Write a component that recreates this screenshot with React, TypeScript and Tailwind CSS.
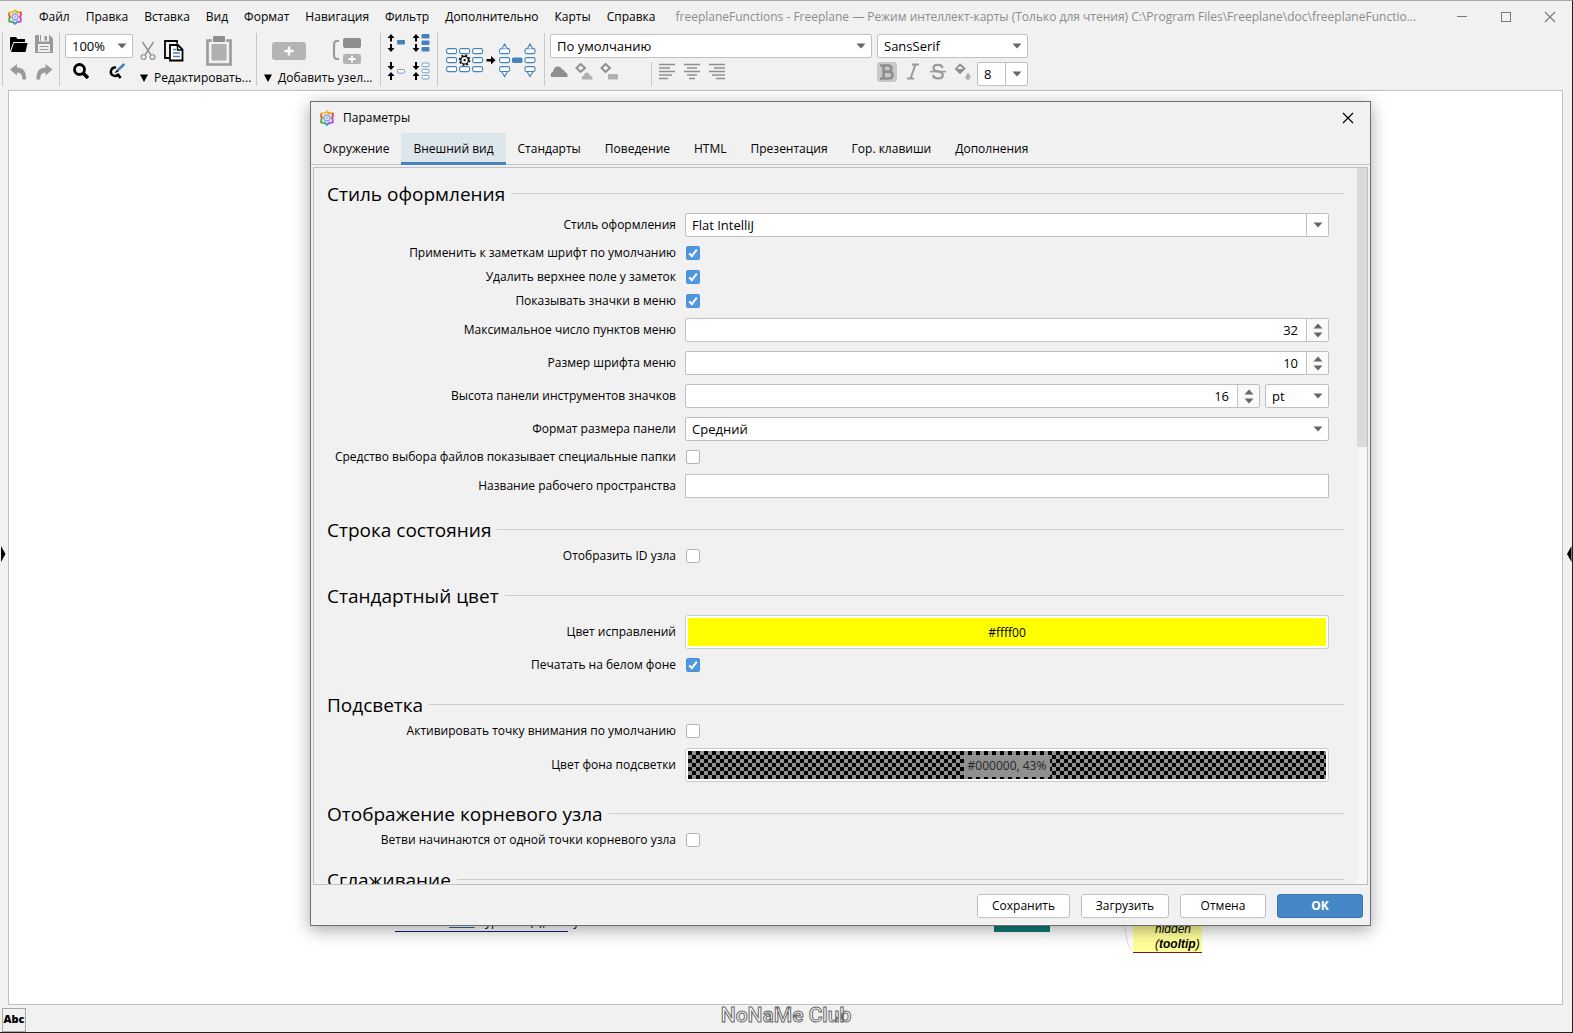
import React, { useState } from 'react';
import clsx from 'clsx';

interface IconProps {
  w: number;
  h: number;
  children: React.ReactNode;
}

const MENU_ITEMS: string[] = [
  'Файл',
  'Правка',
  'Вставка',
  'Вид',
  'Формат',
  'Навигация',
  'Фильтр',
  'Дополнительно',
  'Карты',
  'Справка'
];

const TABS: string[] = [
  'Окружение',
  'Внешний вид',
  'Стандарты',
  'Поведение',
  'HTML',
  'Презентация',
  'Гор. клавиши',
  'Дополнения'
];

const Icon: React.FC<IconProps> = ({ w, h, children }) => (
  <svg width={w} height={h} viewBox={`0 0 ${w} ${h}`} fill="none" className="block shrink-0" aria-hidden="true">
    {children}
  </svg>
);

const Logo: React.FC = () => (
  <Icon w={16} h={16}>
    <g strokeWidth="1.9" strokeLinecap="round">
      <path d="M8 1.4 L9.6 3 L13.6 3.4" stroke="#f0a020" />
      <path d="M13.8 3.6 V6.6 L13 8" stroke="#e8453c" />
      <path d="M13 8 L13.8 9.4 V12.4 L10.4 13" stroke="#c050e8" />
      <path d="M10 13.2 L8 14.8 L6 13.2" stroke="#4a8fe8" />
      <path d="M5.6 13 L2.2 12.4 V9.4 L3 8" stroke="#4cb050" />
      <path d="M3 8 L2.2 6.6 V3.6" stroke="#e05a30" />
      <path d="M2.4 3.4 L6.4 3 L8 1.4" stroke="#e8c830" />
    </g>
    <circle cx="8" cy="8" r="3" stroke="#8fa0d8" strokeWidth="1.4" />
    <circle cx="8" cy="8" r="1.4" fill="#a8c0e8" />
  </Icon>
);

const CloseGlyph: React.FC = () => (
  <Icon w={12} h={12}>
    <path d="M1 1 L11 11 M11 1 L1 11" stroke="currentColor" strokeWidth="1.2" />
  </Icon>
);

const CaretDown: React.FC = () => (
  <Icon w={10} h={6}>
    <path d="M0.5 0.5 H9.5 L5 5.5 Z" fill="#666666" />
  </Icon>
);

const CaretUp: React.FC = () => (
  <Icon w={10} h={6}>
    <path d="M0.5 5.5 H9.5 L5 0.5 Z" fill="#666666" />
  </Icon>
);

const Separator: React.FC = () => <div className="h-[53px] w-px shrink-0 bg-[#c8c8c8]" />;

const ToolButton: React.FC<{ label: string; active?: boolean; children: React.ReactNode }> = ({
  label,
  active,
  children
}) => (
  <button type="button" aria-label={label} className={clsx('shrink-0 rounded-[3px]', active && 'bg-[#c8c8c8]')}>
    {children}
  </button>
);

interface ComboProps {
  label?: string;
  id?: string;
  value: string;
  className?: string;
  split?: boolean;
}

const Combo: React.FC<ComboProps> = ({ label, id, value, className, split }) => (
  <div className={clsx('relative flex h-6', className)}>
    <select
      id={id}
      aria-label={label}
      defaultValue={value}
      className="h-full w-full appearance-none rounded-[2px] border border-[#c0c0c0] bg-white pr-6 pl-1.5 text-[13px] leading-5 text-black outline-none"
    >
      <option>{value}</option>
    </select>
    <span
      className={clsx(
        'pointer-events-none absolute inset-y-0 right-0 flex w-[23px] items-center justify-center',
        split && 'border-l border-[#c0c0c0]'
      )}
    >
      <CaretDown />
    </span>
  </div>
);

const Spinner: React.FC<{ id: string; value: string }> = ({ id, value }) => (
  <div className="flex h-6 flex-1 overflow-hidden rounded-[2px] border border-[#c0c0c0] bg-white">
    <input
      id={id}
      type="text"
      inputMode="numeric"
      defaultValue={value}
      className="min-w-0 flex-1 bg-transparent pr-2 text-right text-[13px] leading-5 outline-none"
    />
    <div className="flex w-[22px] flex-col items-center justify-center gap-[3px] border-l border-[#c0c0c0] bg-[#fafafa]">
      <button type="button" aria-label="Увеличить">
        <CaretUp />
      </button>
      <button type="button" aria-label="Уменьшить">
        <CaretDown />
      </button>
    </div>
  </div>
);

const Section: React.FC<{ title: string; children?: React.ReactNode }> = ({ title, children }) => (
  <section className="flex flex-col gap-[7px]">
    <div className="flex h-6 items-center gap-1.5">
      <h2 className="pt-0.5 text-[19px] leading-6 whitespace-nowrap">{title}</h2>
      <div className="h-px flex-1 bg-[#cdcdcd]" />
    </div>
    {children}
  </section>
);

interface RowProps {
  id: string;
  label: string;
  size: 'check' | 'field' | 'color';
  children: React.ReactNode;
}

const Row: React.FC<RowProps> = ({ id, label, size, children }) => (
  <div
    className={clsx(
      'flex gap-[9px] pr-[15px]',
      size === 'check' && 'h-[17px] items-start',
      size === 'field' && 'h-[26px] items-center',
      size === 'color' && 'h-9 items-center'
    )}
  >
    <label htmlFor={id} className="w-[349px] shrink-0 text-right leading-4 whitespace-nowrap">
      {label}
    </label>
    <div className="flex flex-1 items-center gap-[5px]">{children}</div>
  </div>
);

const CheckRow: React.FC<{ id: string; label: string; initial?: boolean }> = ({ id, label, initial = false }) => {
  const [checked, setChecked] = useState<boolean>(initial);

  return (
    <Row id={id} label={label} size="check">
      <span className="relative flex size-4 items-center justify-center">
        <input
          id={id}
          type="checkbox"
          checked={checked}
          onChange={(e) => setChecked(e.target.checked)}
          className="size-[14px] appearance-none rounded-[2px] border border-[#b4b4b4] bg-white checked:border-[#4a90d9] checked:bg-[#4f97e0]"
        />
        {checked && (
          <span className="pointer-events-none absolute inset-0 flex items-center justify-center">
            <Icon w={10} h={10}>
              <path d="M1.2 5.4 L3.8 8.2 L8.8 1.6" stroke="#ffffff" strokeWidth="2" />
            </Icon>
          </span>
        )}
      </span>
    </Row>
  );
};

const AppearanceTab: React.FC = () => (
  <div className="flex flex-col gap-[18px]">
    <Section title="Стиль оформления">
      <Row id="laf" label="Стиль оформления" size="field">
        <Combo id="laf" value="Flat IntelliJ" className="flex-1" split />
      </Row>
      <CheckRow id="note-font" label="Применить к заметкам шрифт по умолчанию" initial />
      <CheckRow id="note-margin" label="Удалить верхнее поле у заметок" initial />
      <CheckRow id="menu-icons" label="Показывать значки в меню" initial />
      <Row id="menu-max" label="Максимальное число пунктов меню" size="field">
        <Spinner id="menu-max" value="32" />
      </Row>
      <Row id="menu-font" label="Размер шрифта меню" size="field">
        <Spinner id="menu-font" value="10" />
      </Row>
      <Row id="icon-height" label="Высота панели инструментов значков" size="field">
        <Spinner id="icon-height" value="16" />
        <Combo label="Единица" value="pt" className="w-16" />
      </Row>
      <Row id="panel-size" label="Формат размера панели" size="field">
        <Combo id="panel-size" value="Средний" className="flex-1" />
      </Row>
      <CheckRow id="special-folders" label="Средство выбора файлов показывает специальные папки" />
      <Row id="workspace" label="Название рабочего пространства" size="field">
        <input id="workspace" type="text" className="h-6 flex-1 border border-[#c0c0c0] bg-white px-1.5 outline-none" />
      </Row>
    </Section>

    <Section title="Строка состояния">
      <CheckRow id="node-id" label="Отобразить ID узла" />
    </Section>

    <Section title="Стандартный цвет">
      <Row id="edit-color" label="Цвет исправлений" size="color">
        <button
          id="edit-color"
          type="button"
          className="h-[34px] flex-1 rounded-[3px] border border-[#cccccc] bg-white p-0.5"
        >
          <span className="flex h-full items-center justify-center bg-[#ffff00] pt-0.5">#ffff00</span>
        </button>
      </Row>
      <CheckRow id="white-print" label="Печатать на белом фоне" initial />
    </Section>

    <Section title="Подсветка">
      <CheckRow id="spotlight" label="Активировать точку внимания по умолчанию" />
      <Row id="spot-color" label="Цвет фона подсветки" size="color">
        <button
          id="spot-color"
          type="button"
          className="h-[34px] flex-1 rounded-[3px] border border-[#cccccc] bg-white p-0.5"
        >
          <span className="flex h-full items-center justify-center bg-[repeating-conic-gradient(#909090_0_25%,#000000_0_50%)] bg-[length:8px_8px] pt-0.5">
            <span className="bg-[#909090] px-1 leading-[22px] text-[#262626]">#000000, 43%</span>
          </span>
        </button>
      </Row>
    </Section>

    <Section title="Отображение корневого узла">
      <CheckRow id="root-branches" label="Ветви начинаются от одной точки корневого узла" />
    </Section>

    <Section title="Сглаживание" />
  </div>
);

const OptionsDialog: React.FC = () => {
  const [activeTab, setActiveTab] = useState<string>('Внешний вид');

  return (
    <div
      role="dialog"
      aria-label="Параметры"
      className="absolute top-[100px] right-[201px] bottom-[106px] left-[310px] flex flex-col border border-[#6e6e6e] bg-[#f1f1f1] shadow-[0_4px_16px_rgba(0,0,0,0.35)]"
    >
      <div className="flex h-[31px] shrink-0 items-center justify-between pr-4 pl-2">
        <div className="flex items-center gap-2">
          <Logo />
          <span>Параметры</span>
        </div>
        <button type="button" aria-label="Закрыть">
          <CloseGlyph />
        </button>
      </div>

      <div role="tablist" className="flex h-8 shrink-0 border-b border-[#c4c4c4]">
        {TABS.map((tab) => {
          const isActive = tab === activeTab;
          return (
            <button
              key={tab}
              type="button"
              role="tab"
              aria-selected={isActive}
              onClick={() => setActiveTab(tab)}
              className={clsx(
                'h-8 border-b-[3px] px-3 pt-0.5 whitespace-nowrap',
                isActive ? 'border-[#4483bb] bg-[#dde6eb]' : 'border-transparent'
              )}
            >
              {tab}
            </button>
          );
        })}
      </div>

      <div className="mx-0.5 mt-0.5 flex min-h-0 flex-1 border border-[#c0c0c0]">
        <div className="min-w-0 flex-1 overflow-hidden px-[13px] pt-[13px]">
          <AppearanceTab />
        </div>
        <div className="w-[10px] shrink-0 bg-[#f6f6f6]">
          <div className="h-[39%] bg-[#dadada]" />
        </div>
      </div>

      {/* Кнопки внизу окна */}
      <div className="flex h-10 shrink-0 items-center justify-end gap-[11px] pt-0.5 pr-[7px]">
        <button type="button" className="h-6 w-[93px] rounded-[3px] border border-[#c0c0c0] bg-white">
          Сохранить
        </button>
        <button type="button" className="h-6 w-[88px] rounded-[3px] border border-[#c0c0c0] bg-white">
          Загрузить
        </button>
        <button type="button" className="h-6 w-[86px] rounded-[3px] border border-[#c0c0c0] bg-white">
          Отмена
        </button>
        <button type="button" className="h-6 w-[86px] rounded-[3px] border border-[#3d75aa] bg-[#4688c7] font-bold text-white">
          OK
        </button>
      </div>
    </div>
  );
};

const TitleBar: React.FC = () => (
  <header className="flex h-8 shrink-0 items-center pr-4 pl-[7px]">
    <Logo />
    <nav className="ml-2 flex">
      {MENU_ITEMS.map((item) => (
        <button key={item} type="button" className="px-2 whitespace-nowrap">
          {item}
        </button>
      ))}
    </nav>
    <span className="ml-3 min-w-0 flex-1 whitespace-nowrap text-[#8c8c8c]">
      freeplaneFunctions - Freeplane — Режим интеллект-карты (Только для чтения) C:\Program Files\Freeplane\doc\freeplaneFunctio...
    </span>
    <div className="flex shrink-0 items-center gap-8 pl-2 text-[#7a7a7a]">
      <button type="button" aria-label="Свернуть">
        <Icon w={12} h={12}>
          <path d="M1 5.5 H11" stroke="currentColor" />
        </Icon>
      </button>
      <button type="button" aria-label="Развернуть">
        <Icon w={12} h={12}>
          <rect x="1.5" y="1.5" width="9" height="9" stroke="currentColor" />
        </Icon>
      </button>
      <button type="button" aria-label="Закрыть Freeplane">
        <CloseGlyph />
      </button>
    </div>
  </header>
);

const AlignIcon: React.FC<{ d: string }> = ({ d }) => (
  <Icon w={18} h={18}>
    <path d={d} stroke="#8e8e8e" strokeWidth="1.6" />
  </Icon>
);

// Пара стрелок слева от узлов: наружу (развернуть) или внутрь (свернуть)
const FoldArrows: React.FC<{ inward?: boolean }> = ({ inward }) => (
  <path
    d={
      inward
        ? 'M3 0 H5 V4 H7.5 L4 8 L0.5 4 H3 Z M4 10 L7.5 14 H5 V18 H3 V14 H0.5 Z'
        : 'M4 0 L7.5 4 H5 V7.5 H3 V4 H0.5 Z M3 10 H5 V14 H7.5 L4 18 L0.5 14 H3 Z'
    }
    fill="#000000"
  />
);

const NODE_ROWS: number[] = [5, 14, 23];

const Toolbar: React.FC = () => (
  <div className="flex h-[57px] shrink-0 items-start pl-0.5">
    <Separator />
    <div className="grid grid-cols-[18px_18px] gap-x-[7px] gap-y-2.5 py-0.5 pr-1.5 pl-[7px]">
      <ToolButton label="Открыть">
        <Icon w={18} h={18}>
          <path d="M0 16 V3 Q0 2 1 2 H6 L7.5 4 H15 V7 H3.4 Z" fill="#000" />
          <path d="M4 8 H17.5 L15.5 17 H1 Z" fill="#000" />
        </Icon>
      </ToolButton>
      <ToolButton label="Сохранить">
        <Icon w={18} h={18}>
          <path d="M0 0 H14.5 L18 3.5 V18 H0 Z" fill="#9a9a9a" />
          <path d="M4 0 H14 V6.5 H4 Z" fill="#f1f1f1" />
          <path d="M9.5 1 H12 V5.5 H9.5 Z M5 0 H6 V6 H5 Z" fill="#9a9a9a" />
          <path d="M3 9 H15 V17 H3 Z" fill="#f1f1f1" />
          <path d="M4.5 11.5 H13.5 M4.5 14.5 H13.5" stroke="#9a9a9a" />
        </Icon>
      </ToolButton>
      <ToolButton label="Отменить">
        <Icon w={18} h={18}>
          <path d="M0 6.5 L7 1 V4.5 Q16.5 4.5 16 16.5 H12.5 Q12.5 9.5 7 9.5 V12.5 Z" fill="#9a9a9a" />
        </Icon>
      </ToolButton>
      <ToolButton label="Повторить">
        <Icon w={18} h={18}>
          <path d="M17.5 6.5 L10.5 1 V4.5 Q1 4.5 1.5 16.5 H5 Q5 9.5 10.5 9.5 V12.5 Z" fill="#9a9a9a" />
        </Icon>
      </ToolButton>
    </div>
    <Separator />

    <div className="flex flex-col gap-[5px] pt-px pl-[5px]">
      <Combo label="Масштаб" value="100%" className="w-[68px]" />
      <div className="flex gap-5 pl-2">
        <ToolButton label="Найти">
          <Icon w={16} h={16}>
            <circle cx="6.5" cy="6.5" r="5" stroke="#000" strokeWidth="2.8" />
            <path d="M10 10 L15 15" stroke="#000" strokeWidth="3.4" />
          </Icon>
        </ToolButton>
        <ToolButton label="Найти и заменить">
          <Icon w={16} h={16}>
            <path d="M7 4.6 A4.2 4.2 0 1 0 9.6 11" stroke="#000" strokeWidth="2.4" />
            <path d="M8.4 11 L11.6 15" stroke="#000" strokeWidth="2.8" />
            <path d="M15.4 1 L8.6 7.4" stroke="#4483bb" strokeWidth="2.6" />
            <path d="M8 6.8 L5.4 10.2 L9.6 8.4 Z" fill="#000" />
          </Icon>
        </ToolButton>
      </div>
    </div>

    <div className="flex w-[123px] flex-col gap-[3px] pt-0.5 pl-[7px]">
      <div className="flex h-8 items-center gap-2">
        <ToolButton label="Вырезать">
          <Icon w={16} h={20}>
            <path d="M2.5 1 L11 14 M13.5 1 L5 14" stroke="#8e8e8e" strokeWidth="1.4" />
            <circle cx="3.6" cy="16" r="2.4" stroke="#9a9a9a" strokeWidth="1.4" />
            <circle cx="12.4" cy="16" r="2.4" stroke="#9a9a9a" strokeWidth="1.4" />
          </Icon>
        </ToolButton>
        <ToolButton label="Копировать">
          <Icon w={20} h={22}>
            <path d="M5 18 H1 V1 H13 V3.5" stroke="#000" strokeWidth="1.8" />
            <path d="M6 5 H14 L18.5 9.5 V20.5 H6 Z" fill="#fff" stroke="#000" strokeWidth="1.8" />
            <path d="M13.5 5 V10 H18" stroke="#000" strokeWidth="1.4" />
            <path d="M9 9.5 H12 M9 13 H16 M9 16.5 H16" stroke="#4483bb" strokeWidth="1.4" />
          </Icon>
        </ToolButton>
        <span className="w-1.5" />
        <ToolButton label="Вставить">
          <Icon w={26} h={30}>
            <path d="M6 4.5 H1.5 V28.5 H24.5 V4.5 H20" stroke="#9a9a9a" strokeWidth="2.6" />
            <rect x="7" y="0" width="12" height="6" rx="1" fill="#8e8e8e" />
            <rect x="5.5" y="8" width="15" height="16.5" rx="1" fill="#b0b0b0" />
          </Icon>
        </ToolButton>
      </div>
      <button type="button" className="flex items-center gap-1.5 leading-4 whitespace-nowrap">
        <Icon w={8} h={8}>
          <path d="M0 0.5 H8 L4 8 Z" fill="#000" />
        </Icon>
        Редактировать...
      </button>
    </div>
    <Separator />

    <div className="flex w-[123px] flex-col gap-[3px] pt-0.5 pl-[7px]">
      <div className="flex h-8 items-center gap-[26px] pl-2">
        <ToolButton label="Новый дочерний узел">
          <Icon w={34} h={18}>
            <rect x="0" y="0" width="34" height="18" rx="3" fill="#b4b4b4" />
            <path d="M17 4.5 V13.5 M12.5 9 H21.5" stroke="#fff" strokeWidth="2.4" />
          </Icon>
        </ToolButton>
        <ToolButton label="Новый соседний узел">
          <Icon w={30} h={28}>
            <path d="M7 4 H5 Q2 4 2 8 V18 Q2 22 5 22 H7" stroke="#9a9a9a" strokeWidth="2.2" />
            <rect x="11" y="1" width="18" height="10" rx="2" fill="#8e8e8e" />
            <rect x="11" y="17" width="18" height="10" rx="2" fill="#b4b4b4" />
            <path d="M20 18.5 V25.5 M16.5 22 H23.5" stroke="#fff" strokeWidth="1.8" />
          </Icon>
        </ToolButton>
      </div>
      <button type="button" className="flex items-center gap-1.5 leading-4 whitespace-nowrap">
        <Icon w={8} h={8}>
          <path d="M0 0.5 H8 L4 8 Z" fill="#000" />
        </Icon>
        Добавить узел...
      </button>
    </div>
    <Separator />

    <div className="grid grid-cols-[19px_19px] gap-x-1.5 gap-y-2.5 px-1.5 pt-px">
      <ToolButton label="Развернуть уровень">
        <Icon w={19} h={18}>
          <FoldArrows />
          <rect x="10" y="6" width="8" height="4.5" rx="1" fill="#4483bb" />
        </Icon>
      </ToolButton>
      <ToolButton label="Развернуть всё">
        <Icon w={19} h={18}>
          <FoldArrows />
          <rect x="9.5" y="0" width="8" height="4.5" rx="1" fill="#4483bb" />
          <rect x="9.5" y="6.5" width="8" height="4.5" rx="1" fill="#4483bb" />
          <rect x="9.5" y="13" width="8" height="4.5" rx="1" fill="#4483bb" />
        </Icon>
      </ToolButton>
      <ToolButton label="Свернуть уровень">
        <Icon w={19} h={18}>
          <FoldArrows inward />
          <rect x="10.5" y="7.5" width="7" height="3.6" rx="1" fill="#fff" stroke="#6f9fcb" />
        </Icon>
      </ToolButton>
      <ToolButton label="Свернуть всё">
        <Icon w={19} h={18}>
          <FoldArrows inward />
          <rect x="10" y="1" width="7" height="3.6" rx="1" fill="#fff" stroke="#6f9fcb" />
          <rect x="10" y="7.2" width="7" height="3.6" rx="1" fill="#fff" stroke="#6f9fcb" />
          <rect x="10" y="13.4" width="7" height="3.6" rx="1" fill="#fff" stroke="#6f9fcb" />
        </Icon>
      </ToolButton>
    </div>
    <Separator />

    <div className="px-2 pt-2.5">
      <ToolButton label="Показать выбранные узлы">
        <Icon w={90} h={36}>
          <g fill="#fff" stroke="#4483bb" strokeWidth="1.1">
            {NODE_ROWS.map((y) => (
              <React.Fragment key={y}>
                <rect x="0.6" y={y + 0.6} width="10" height="5" rx="1.6" />
                <rect x="13.6" y={y + 0.6} width="10" height="5" rx="1.6" />
                <rect x="26.6" y={y + 0.6} width="10" height="5" rx="1.6" />
                <rect x="53.6" y={y + 0.6} width="10" height="5" rx="1.6" />
                <rect x="79" y={y + 0.6} width="10" height="5" rx="1.6" />
              </React.Fragment>
            ))}
            <path d="M56 5.6 L58.6 1 L61.2 5.6 M81.4 5.6 L84 1 L86.6 5.6" />
            <path d="M56 29 L58.6 33.6 L61.2 29 M81.4 29 L84 33.6 L86.6 29" />
          </g>
          <rect x="66" y="14.5" width="10.5" height="5.5" rx="1.5" fill="#4483bb" />
          <circle cx="18.6" cy="17.2" r="5.4" fill="#f1f1f1" />
          <circle cx="18.6" cy="17.2" r="4.9" stroke="#000" strokeWidth="1.6" strokeDasharray="1.92 1.92" />
          <circle cx="18.6" cy="17.2" r="3.8" stroke="#000" strokeWidth="1.2" />
          <circle cx="18.6" cy="17.2" r="1.1" fill="#000" />
          <path d="M40.5 16 H45 V13 L49.5 17.2 L45 21.5 V18.6 H40.5 Z" fill="#000" />
        </Icon>
      </ToolButton>
    </div>
    <Separator />

    <div className="flex gap-[5px] pt-px pl-[5px]">
      <div className="flex w-[322px] flex-col gap-1">
        <Combo label="Стиль узла" value="По умолчанию" />
        <div className="flex h-6 items-start gap-[7px]">
          <ToolButton label="Облако">
            <Icon w={18} h={18}>
              <path d="M1 15 Q0 10.5 3 10 Q3.5 4.5 8 4.5 Q11 4.5 12 7.5 Q14.5 7 15 10 Q18 11 17.5 15 Z" fill="#8e8e8e" />
            </Icon>
          </ToolButton>
          <ToolButton label="Цвет облака">
            <Icon w={18} h={18}>
              <path d="M5.5 2 L10 6 L5.5 10 L1.5 6 Z" stroke="#8e8e8e" strokeWidth="2" />
              <path d="M7 17.5 Q6 14 9 13.5 Q9.5 10.5 12 10.5 Q14 10.5 15 13.5 Q18 14 17.5 17.5 Z" fill="#b0b0b0" />
            </Icon>
          </ToolButton>
          <ToolButton label="Цвет узла">
            <Icon w={18} h={18}>
              <path d="M5.5 2 L10 6 L5.5 10 L1.5 6 Z" stroke="#8e8e8e" strokeWidth="2" />
              <rect x="8" y="12" width="10" height="5.5" rx="1" fill="#b0b0b0" />
            </Icon>
          </ToolButton>
          <span className="ml-[26px] h-6 w-px bg-[#c8c8c8]" />
          <div className="flex gap-[7px]">
            <ToolButton label="По левому краю">
              <AlignIcon d="M0 2.5 H16 M0 6 H11 M0 9.5 H16 M0 13 H13 M0 16.5 H9" />
            </ToolButton>
            <ToolButton label="По центру">
              <AlignIcon d="M0 2.5 H16 M3 6 H13 M0 9.5 H16 M3 13 H13 M5 16.5 H11" />
            </ToolButton>
            <ToolButton label="По правому краю">
              <AlignIcon d="M0 2.5 H16 M5 6 H16 M0 9.5 H16 M3 13 H16 M7 16.5 H16" />
            </ToolButton>
          </div>
        </div>
      </div>

      <div className="flex w-[151px] flex-col gap-1">
        <Combo label="Шрифт" value="SansSerif" />
        <div className="flex h-6 items-start justify-between">
          <ToolButton label="Полужирный" active>
            <Icon w={20} h={20}>
              <path
                d="M3 3.5 H11 Q14.5 3.5 14.5 6.5 Q14.5 9.4 11 9.6 Q15.6 10 15.6 13 Q15.6 16.5 11.5 16.5 H3 M6.6 3.5 V16.5 M6.6 9.6 H12"
                stroke="#8e8e8e"
                strokeWidth="2.6"
              />
            </Icon>
          </ToolButton>
          <ToolButton label="Курсив">
            <Icon w={20} h={20}>
              <path d="M9 2.5 H16 M4 16.5 H11 M12.5 2.5 L7.5 16.5" stroke="#9a9a9a" strokeWidth="2" />
            </Icon>
          </ToolButton>
          <ToolButton label="Зачёркнутый">
            <Icon w={20} h={20}>
              <path
                d="M14.5 6 Q14 2.8 10 2.8 Q5.5 2.8 5.5 6 Q5.5 8.6 10 9.4 Q14.8 10.4 14.8 13 Q14.8 16.4 10 16.4 Q5.5 16.4 5 13"
                stroke="#9a9a9a"
                strokeWidth="2.2"
              />
              <path d="M2 9.6 H18" stroke="#9a9a9a" strokeWidth="1.6" />
            </Icon>
          </ToolButton>
          <ToolButton label="Цвет текста">
            <Icon w={18} h={20}>
              <path d="M6 2.5 L10.5 6.5 L6 11 L2 7 Z" stroke="#8e8e8e" strokeWidth="1.8" />
              <path d="M2 7 H10 L6 11 Z" fill="#8e8e8e" />
              <path d="M14 10.5 Q17 14 16.6 15.6 Q16 18 14 18 Q11.8 18 11.4 15.6 Q11.4 14 14 10.5 Z" fill="#b0b0b0" />
            </Icon>
          </ToolButton>
          <Combo label="Размер шрифта" value="8" className="w-[51px]" split />
        </div>
      </div>
    </div>
  </div>
);

const MapView: React.FC = () => (
  <main className="relative flex min-h-0 flex-1 items-center justify-between">
    <button type="button" aria-label="Левая панель" className="mt-3">
      <Icon w={6} h={16}>
        <path d="M1 0 L5.5 8 L1 16 Z" fill="#000" />
      </Icon>
    </button>
    <div className="absolute inset-y-0 right-[9px] left-2 overflow-hidden border border-[#c0c0c0] bg-white">
      {/* Узлы карты, выглядывающие из-под окна */}
      <div className="absolute bottom-[72px] left-[386px] w-[173px] border-b border-[#1a1a80] text-xs leading-[19px] whitespace-nowrap">
        Text with <a href="#link" className="text-[#336699] underline">links</a> hyperlink(s), and y
      </div>
      <div className="absolute bottom-[72px] left-[985px] h-10 w-14 bg-[#0f7b78]" />
      <div className="absolute bottom-[51px] left-[1124px] w-[69px] border-b border-[#7a1a1a] bg-[#ffff99] pl-[22px] font-['Liberation_Sans'] text-xs leading-[15px] italic">
        hidden
        <br />(<b>tooltip</b>)
      </div>
      <svg className="absolute bottom-[52px] left-[1114px]" width="10" height="34" viewBox="0 0 10 34" fill="none">
        <path d="M1 0 Q3 28 9 33" stroke="#dddddd" />
      </svg>
    </div>
    <button type="button" aria-label="Правая панель" className="mt-3">
      <Icon w={6} h={16}>
        <path d="M5.5 0 L1 8 L5.5 16 Z" fill="#000" />
      </Icon>
    </button>
  </main>
);

const App: React.FC = () => {
  return (
    <div className="relative flex h-screen flex-col overflow-hidden border-t border-r border-b border-t-[#a8a8a8] border-r-[#202020] border-b-[#202020] bg-[#f1f1f1] font-['Open_Sans','Noto_Sans',sans-serif] text-xs text-black">
      <TitleBar />
      <Toolbar />
      <MapView />
      <footer className="relative flex h-[27px] shrink-0 items-center pl-0.5">
        <button
          type="button"
          className="mt-0.5 h-6 w-6 border border-[#a8a8a8] text-[11px] font-black"
        >
          Abc
        </button>
        <span className="absolute inset-x-0 top-0 text-center font-['Roboto',sans-serif] text-[21px] leading-5 font-medium text-white [-webkit-text-stroke:1px_#666666]">
          NoNaMe Club
        </span>
      </footer>
      <OptionsDialog />
    </div>
  );
};

export default App;
